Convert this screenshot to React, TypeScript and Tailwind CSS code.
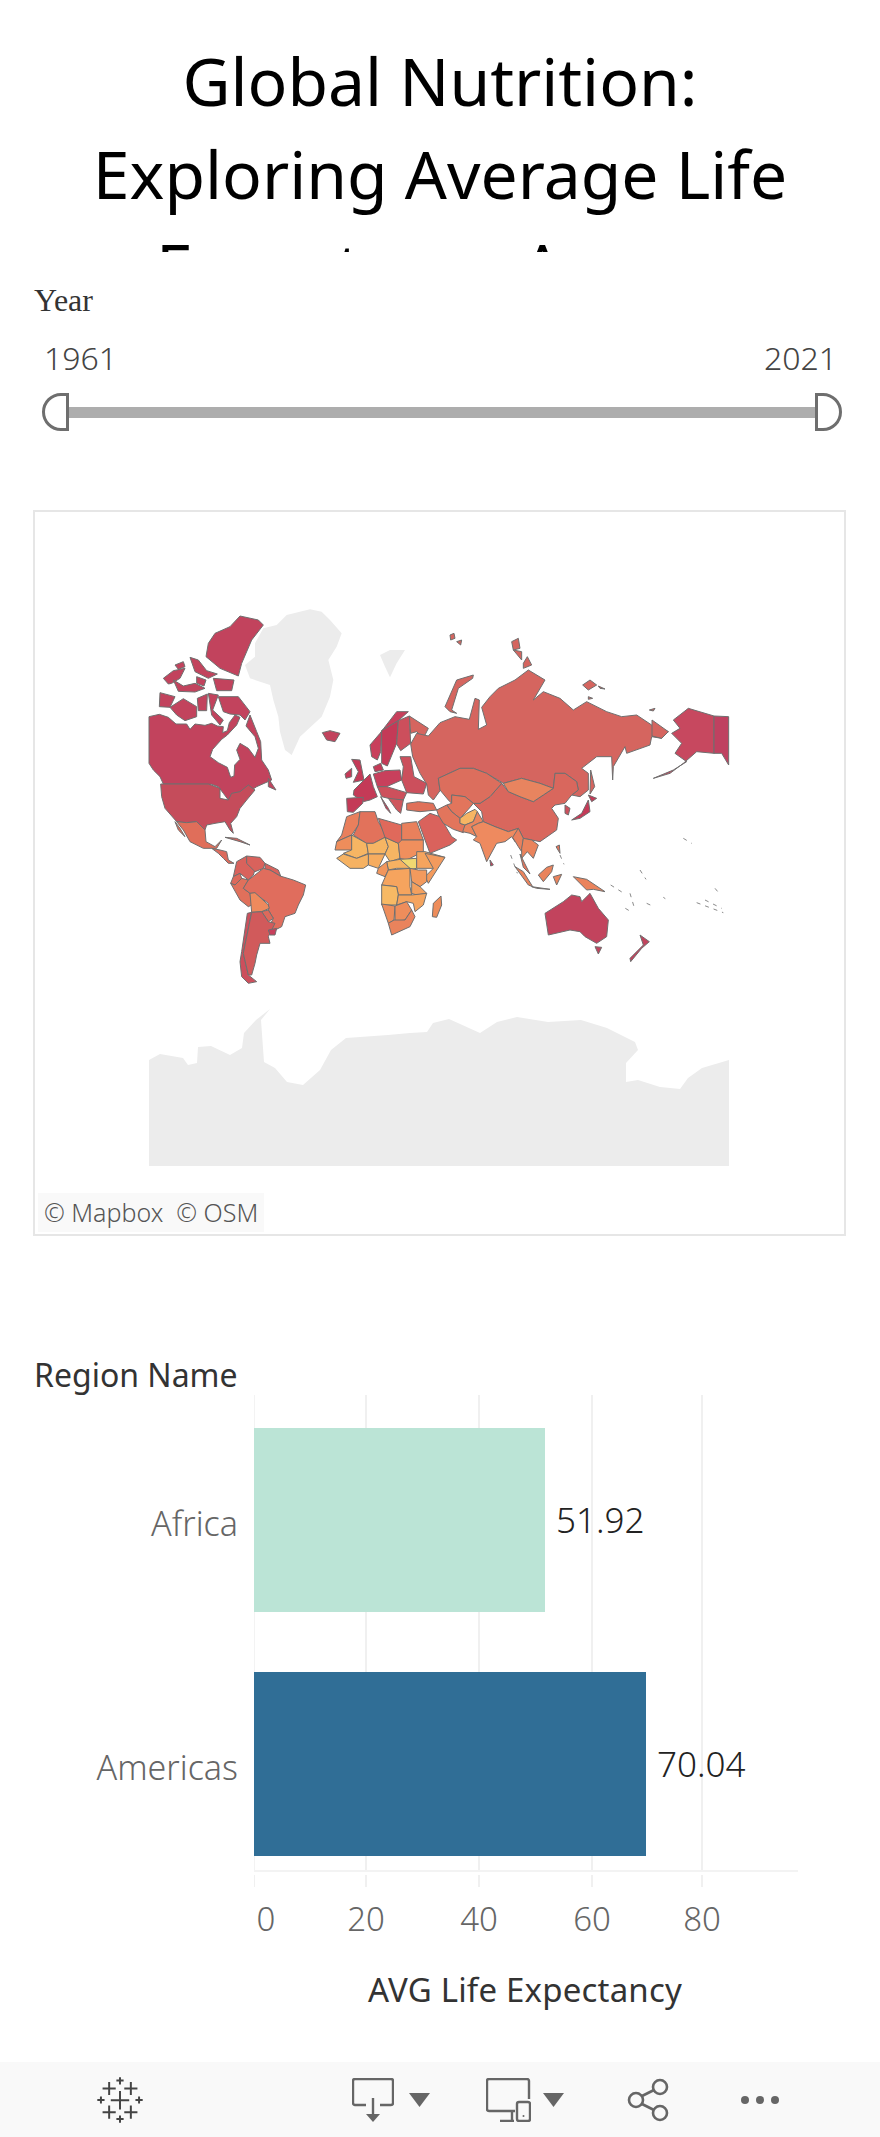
const STROKE = '#6f6f6f';

// Each group is traced in 3x crop coordinates, anchored at a page offset.
type Shape = [string, string];

const NORTH_WEST: Shape[] = [
  ['#c2435d', '27,350 58,343 85,352 108,372 140,372 150,388 165,372 195,376 215,370 232,378 250,380 248,398 262,392 268,368 285,345 300,352 290,375 262,405 245,418 218,448 210,470 235,488 262,502 272,532 282,528 284,495 300,478 290,450 300,430 325,445 345,472 355,445 345,410 318,378 330,345 350,395 362,425 365,480 385,510 395,540 350,560 320,580 297,606 265,600 250,580 235,560 215,553 70,552 60,530 40,510 27,490'],
  ['#c2435d', '385,535 408,570 385,560'],
  ['#c2435d', '370,75 355,60 300,48 270,80 225,100 205,130 198,170 240,205 295,228 305,190 335,120'],
  ['#c2435d', '70,235 100,212 135,205 120,235 95,250 85,252'],
  ['#c2435d', '105,195 130,185 135,200 115,208'],
  ['#c2435d', '150,172 175,180 200,212 232,222 205,235 165,215'],
  ['#c2435d', '100,240 130,258 165,250 195,265 165,276 115,274'],
  ['#c2435d', '170,230 198,240 192,258 170,250'],
  ['#c2435d', '220,235 282,240 275,272 230,272'],
  ['#c2435d', '60,278 105,290 90,322 58,320'],
  ['#c2435d', '90,322 130,296 170,320 170,350 135,362 110,345'],
  ['#c2435d', '172,295 202,282 200,332 175,332'],
  ['#c2435d', '205,280 235,285 218,330 250,360 240,375 215,345'],
  ['#c2435d', '235,290 295,290 330,335 315,360 300,345 270,342 250,335'],
  ['#c2435d', '547,398 570,392 600,400 585,425 560,420'],
  ['#c43a57', '635,478 660,480 672,540 640,547 655,515'],
  ['#c43a57', '615,522 635,505 635,530 618,535'],
  ['#c8405c', '690,435 720,400 770,335 805,335 775,362 725,392 722,455 712,480 695,470'],
  ['#c43a57', '725,392 775,362 770,430 742,498 725,490'],
  ['#cc4f5c', '775,362 808,348 812,430 782,452 770,432'],
  ['#d5655f', '808,348 865,385 850,415 830,395 812,400'],
  ['#c43a57', '700,500 722,490 730,510 705,515'],
  ['#c43a57', '642,570 690,522 700,560 712,590 690,600 670,605 640,585'],
  ['#c8405c', '700,522 735,512 780,510 785,540 740,560 712,560'],
  ['#cc4f5c', '780,470 812,470 822,530 860,550 850,582 800,578 785,540 790,500'],
  ['#cd505c', '712,560 740,560 800,578 790,600 765,600 745,595 725,590'],
  ['#c43a57', '722,590 745,625 752,640 738,625'],
  ['#cf565c', '745,595 790,600 782,640 770,630'],
  ['#c43a57', '620,595 670,592 668,610 640,637 622,635'],
];

const GREENLAND: string[] = [
  '315,195 345,170 345,130 370,85 410,75 440,45 510,28 545,35 570,60 605,100 590,140 565,180 580,240 570,290 545,350 480,410 455,465 435,450 420,395 415,350 400,300 390,255 330,235',
  '720,165 750,150 795,150 770,190 750,232 735,200',
];

// Antarctica, in page pixels
const ANTARCTICA =
  '149,1060 160,1054 183,1058 188,1065 197,1063 198,1047 211,1046 230,1055 242,1048 244,1033 256,1020 270,1009 261,1020 264,1062 275,1068 287,1082 303,1085 320,1070 331,1050 346,1038 388,1035 410,1033 427,1032 433,1023 449,1019 480,1033 497,1022 517,1017 548,1022 581,1020 607,1028 635,1042 638,1050 626,1063 626,1082 638,1080 660,1087 680,1089 688,1078 702,1068 729,1060 729,1166 149,1166';

const NORTH_EAST: Shape[] = [
  ['#d5655f', '-35,408 0,368 45,350 88,358 105,295 118,300 115,388 140,375 125,322 150,290 175,265 225,240 265,210 315,240 280,300 310,275 360,295 400,330 440,305 500,335 545,350 590,345 635,375 685,395 665,415 635,410 630,435 560,460 555,440 520,500 518,540 515,470 470,470 425,505 445,520 445,570 420,590 395,585 415,570 410,545 375,520 345,520 340,565 300,550 245,535 190,550 140,520 100,505 60,505 -5,535 0,572 -20,600 -35,585 -40,552 -60,520 -82,470 -88,432 -70,400'],
  ['#d5655f', '15,320 50,240 100,225 98,235 55,265 35,330 50,340 30,335'],
  ['#d5655f', '215,125 235,115 240,145 220,150'],
  ['#d5655f', '220,150 245,155 245,180'],
  ['#d5655f', '250,190 262,170 275,195 250,205'],
  ['#d5655f', '428,255 450,240 470,255 445,270'],
  ['#d5655f', '475,258 495,267 480,265'],
  ['#d5655f', '445,290 458,295 445,298'],
  ['#d5655f', '628,330 645,325 640,333'],
  ['#d5655f', '452,510 464,560 450,582'],
  ['#d5655f', '636,360 685,395 665,415 636,408'],
  ['#c7485f', '700,360 745,325 822,348 822,460 770,455 730,490 690,520 640,535 700,510 740,485 705,460 725,430 695,400 720,385'],
  ['#bf4160', '822,348 866,350 866,495 845,460 822,460'],
  ['#d5655f', '30,105 42,100 45,115 32,120'],
  ['#d5655f', '50,125 65,120 62,135'],
];

const SOUTH_WEST: Shape[] = [
  ['#c54c5b', '62,12 205,12 240,25 240,55 265,60 275,40 300,35 325,15 345,30 320,60 300,85 290,110 272,130 280,160 270,150 255,125 225,130 200,135 195,150 170,125 140,128 110,125 75,85 65,50'],
  ['#e06e5a', '110,125 140,128 170,125 195,150 198,185 225,200 245,180 230,205 215,205 190,205 150,185 130,150'],
  ['#e06e5a', '105,125 120,145 135,170 115,150'],
  ['#dc6a5c', '215,205 240,210 260,215 265,240 282,250 265,250 250,235 235,220'],
  ['#d5655f', '255,172 290,175 330,195 300,185'],
  // South America
  ['#d9625c', '290,245 320,228 320,250 345,270 340,285 325,300 300,280 280,290'],
  ['#d9625c', '320,228 360,232 375,250 370,265 345,275 320,250'],
  ['#d9625c', '375,250 415,270 422,288 390,270 375,275'],
  ['#dd695b', '272,310 280,290 300,280 305,295 285,315'],
  ['#e0705b', '272,310 285,315 305,295 325,300 310,325 330,340 335,375 325,380 300,360'],
  ['#e06d5d', '310,325 325,300 345,285 370,265 390,270 420,288 460,300 497,315 490,345 475,375 465,400 435,410 425,440 405,450 385,445 400,415 385,390 385,370 345,340 330,340'],
  ['#ee8a5d', '330,340 345,338 385,375 388,385 365,395 335,397'],
  ['#dd695b', '365,395 385,390 400,415 385,425'],
  ['#cc4f5c', '322,400 335,397 318,480 310,520 325,585 350,605 325,610 305,590 300,545 305,515'],
  ['#d15a5b', '335,397 365,395 385,425 405,430 385,470 390,490 360,490 350,525 345,550 335,585 325,585 310,520 318,480'],
  ['#c8405c', '385,450 410,445 405,465 390,465'],
  // Africa
  ['#e97f5c', '620,110 660,95 655,135 635,165 590,185 605,165'],
  ['#e2725b', '660,95 705,95 715,125 740,170 700,190 680,190 640,165 655,135'],
  ['#ee8d5b', '590,185 635,165 635,210 585,210'],
  ['#f6b563', '635,165 680,190 685,220 650,235 610,220 635,210'],
  ['#f6b563', '680,190 700,190 735,172 745,200 735,222 685,222'],
  ['#f6b563', '735,172 775,190 780,235 750,245 735,222 745,200'],
  ['#e0695b', '715,115 750,125 785,135 785,185 775,190 735,172'],
  ['#e9805c', '785,130 830,125 850,180 785,180'],
  ['#f08f5d', '785,180 850,180 850,215 800,240 780,235 775,190'],
  ['#f6ac5f', '685,222 735,222 715,265 685,255'],
  ['#f6b262', '590,235 610,222 650,235 685,222 685,255 670,265 630,265'],
  ['#f1d871', '780,238 830,235 830,265 810,268'],
  ['#f5a45e', '830,215 855,215 915,232 880,265 830,265'],
  ['#f39a5d', '855,220 915,232 865,310 855,290 880,265'],
  ['#f6b262', '740,245 780,238 810,265 770,265 745,270'],
  ['#f1965d', '715,265 740,245 745,270 735,290 710,280'],
  ['#f6a45e', '745,270 810,265 810,320 815,345 775,345 770,320 725,315'],
  ['#f39a5d', '810,265 835,270 860,270 860,305 840,320 815,305'],
  ['#f3a05e', '815,305 840,320 860,340 830,345 815,340'],
  ['#f7b964', '725,315 770,320 775,345 770,375 725,375'],
  ['#f5a45e', '775,345 815,345 860,340 850,375 825,395 820,370 800,365 770,375'],
  ['#ee8d5b', '725,372 765,378 762,420 745,430'],
  ['#ee8d5b', '765,378 800,365 815,390 795,420 765,425'],
  ['#ea835c', '745,430 762,420 795,420 815,390 825,410 810,440 755,465'],
  ['#ee8d5b', '903,348 905,375 890,412 877,410 880,370'],
  // Turkey and the Middle East, west of the join
  ['#e07059', '800,70 835,65 880,70 890,90 840,95 800,90'],
  ['#da625c', '835,125 870,100 900,110 935,170 950,180 930,195 870,220 855,180'],
];

const SOUTH_EAST: Shape[] = [
  ['#d9675d', '185,10 205,35 240,50 280,65 310,45 340,25 345,-20 375,-20 410,5 415,30 395,45 375,70 345,75 335,85 355,115 350,150 300,185 250,175 235,145 205,155 165,140 130,125 125,95 100,70 120,70 150,50'],
  ['#e8845f', '190,10 245,-5 300,10 340,25 310,45 280,65 240,50 205,35'],
  ['#dc6e5d', '-5,-5 60,-35 100,-35 140,-20 185,10 150,50 120,70 100,70 75,50 35,45 35,70 25,60 0,30'],
  ['#e2755c', '35,45 75,50 100,70 85,88 60,115 35,95 20,75 35,70'],
  ['#e2755c', '-10,90 20,75 35,95 60,115 60,130 75,135 70,158 40,148 10,130 -5,105'],
  ['#f6b563', '60,115 80,100 105,88 112,95 100,125 75,135 60,130'],
  ['#ea855e', '100,125 112,95 130,125 115,130 95,140 110,170 90,160 68,155 75,135'],
  ['#ee8a5f', '130,125 165,140 205,155 235,145 240,165 225,185 215,170 195,185 170,190 140,245 120,190 100,180 110,170 95,140 115,130'],
  ['#c8405c', '150,240 160,255 152,258'],
  ['#e8805d', '235,145 250,175 245,215 235,200 218,172'],
  ['#ea835c', '250,175 275,180 295,195 280,235 262,215 245,235 245,205'],
  ['#e2755c', '240,222 270,282 250,262'],
  ['#ea835c', '225,260 250,275 278,320 265,315'],
  ['#ea835c', '295,285 320,262 340,255 335,275 310,305'],
  ['#ea835c', '275,320 330,328 290,325'],
  ['#ea835c', '340,290 365,283 350,315'],
  ['#ea835c', '400,290 440,298 495,335 460,328 440,330'],
  ['#e2755c', '348,200 358,195 360,220'],
  ['#c43a57', '395,120 425,100 445,60 450,95 420,115'],
  ['#c43a57', '445,45 470,55 455,65'],
  ['#cc4f5c', '375,75 390,85 385,105 375,100'],
  ['#c2435d', '315,400 370,365 395,345 420,350 425,365 450,340 475,385 505,420 500,470 470,490 435,470 420,455 390,450 325,465'],
  ['#c2435d', '465,500 485,502 475,522'],
  ['#c2435d', '600,465 628,485 605,505 572,545 570,535 610,495'],
];

const SPECKS = [
  'M730 175l25 15', 'M600 270l18 28', 'M620 370l22 10', 'M556 385l20 12', 'M512 315l35 22',
  'M570 340l12 40', 'M770 368l80 30', 'M795 360l50 25', 'M825 325l10 12', 'M670 352l6 4',
  'M360 225l12 28', 'M212 225l20 55',
];

function Shapes({ shapes, x, y }: { shapes: Shape[]; x: number; y: number }) {
  return (
    <g transform={`translate(${x} ${y}) scale(${1 / 3})`}>
      {shapes.map(([fill, points], i) => (
        <polygon
          key={i}
          points={points}
          fill={fill}
          stroke={STROKE}
          strokeWidth={1}
          strokeLinejoin="round"
          vectorEffect="non-scaling-stroke"
        />
      ))}
    </g>
  );
}

// viewBox is in page pixels, so the crop offsets can be used directly
function WorldMap() {
  return (
    <svg viewBox="35 512 809 722" className="block w-full h-full">
      <g transform={`translate(140 600) scale(${1 / 3})`} fill="#ececec">
        {GREENLAND.map((p, i) => (
          <polygon key={i} points={p} />
        ))}
      </g>
      <polygon points={ANTARCTICA} fill="#ececec" />
      <Shapes shapes={NORTH_WEST} x={140} y={600} />
      <Shapes shapes={NORTH_EAST} x={440} y={600} />
      <Shapes shapes={SOUTH_WEST} x={140} y={780} />
      <Shapes shapes={SOUTH_EAST} x={440} y={780} />
      <g transform={`translate(440 780) scale(${1 / 3})`} stroke="#8a8a8a" fill="none" strokeDasharray="4 5">
        {SPECKS.map((d, i) => (
          <path key={i} d={d} vectorEffect="non-scaling-stroke" />
        ))}
      </g>
    </svg>
  );
}

function Caret() {
  return (
    <svg width="21" height="14" viewBox="0 0 21 14" className="block">
      <path d="M0 0h21l-10.5 14z" fill="#666" />
    </svg>
  );
}

function TableauLogo() {
  return (
    <svg width="48" height="48" viewBox="105 76 146 146" className="block">
      <g stroke="#444" strokeWidth="6" transform="translate(39 0)">
        <path d="M139 122v56M111 150h56" />
        <path d="M106 94v40M86 114h40M172 94v40M152 114h40M106 166v40M86 186h40M172 166v40M152 186h40" />
        <path d="M139 80v22M128 90h22M139 196v22M128 207h22M81 138v22M70 149h22M197 138v22M186 149h22" />
      </g>
    </svg>
  );
}

function DownloadIcon() {
  return (
    <svg width="42" height="44" viewBox="0 0 42 44" fill="none" className="block">
      <path d="M14 27H3a2 2 0 0 1-2-2V3a2 2 0 0 1 2-2h36a2 2 0 0 1 2 2v22a2 2 0 0 1-2 2H28" stroke="#666" strokeWidth="2.4" />
      <path d="M21 20v17" stroke="#666" strokeWidth="2.4" />
      <path d="M14 36h14l-7 8z" fill="#666" />
    </svg>
  );
}

function DevicesIcon() {
  return (
    <svg width="45" height="44" viewBox="0 0 45 44" fill="none" stroke="#666" strokeWidth="2.4" className="block">
      <path d="M43 21V3a2 2 0 0 0-2-2H3a2 2 0 0 0-2 2v28a2 2 0 0 0 2 2h26" />
      <path d="M26 33v9M14 43h14" />
      <rect x="31" y="24" width="13" height="19" rx="2" />
      <circle cx="37.5" cy="38" r="1" fill="#666" stroke="none" />
    </svg>
  );
}

function ShareIcon() {
  return (
    <svg width="42" height="44" viewBox="0 0 42 44" fill="none" stroke="#666" strokeWidth="2.6" className="block">
      <circle cx="33" cy="9" r="7" />
      <circle cx="9" cy="22" r="7" />
      <circle cx="33" cy="35" r="7" />
      <path d="M15 18l12-6M15 26l12 6" />
    </svg>
  );
}

function Dots() {
  return (
    <div className="flex gap-[7px]">
      <span className="w-[8px] h-[8px] rounded-full bg-[#666]" />
      <span className="w-[8px] h-[8px] rounded-full bg-[#666]" />
      <span className="w-[8px] h-[8px] rounded-full bg-[#666]" />
    </div>
  );
}

function BarRow({ label, value, width, color }: { label: string; value: string; width: string; color: string }) {
  return (
    <div className="relative flex items-center">
      <div className="w-[238px] pt-[6px] text-right text-[34px] leading-[48px] font-light text-[#666]">{label}</div>
      <div className={`ml-[16px] h-[184px] ${width} ${color}`} />
      <div className="ml-[11px] text-[35px] leading-[48px] font-light text-[#222]">{value}</div>
    </div>
  );
}

export default function App() {
  return (
    <div className="flex flex-col w-[880px] h-[2137px] overflow-hidden bg-white font-['Noto_Sans',sans-serif]">
      <div className="h-[252px] shrink-0 overflow-hidden px-[70px] pt-[34px] text-center text-[66px] leading-[93px] text-black">
        Global Nutrition: Exploring Average Life Expectancy Across
      </div>

      <div className="mt-[28px] ml-[34px] h-[40px] font-['Liberation_Serif',serif] text-[32px] leading-[40px] text-[#333]">
        Year
      </div>
      <div className="mt-[18px] pl-[44px] pr-[43px] flex justify-between h-[40px] text-[32px] leading-[40px] font-light text-[#444]">
        <span>1961</span>
        <span>2021</span>
      </div>
      <div className="mt-[15px] ml-[42px] mr-[38px] flex items-center">
        <div className="w-[27px] h-[38px] border-[3px] border-[#6e6e6e] rounded-l-[19px]" />
        <div className="flex-1 h-[11px] bg-[#adadad]" />
        <div className="w-[27px] h-[38px] border-[3px] border-[#6e6e6e] rounded-r-[19px]" />
      </div>

      <div className="relative mt-[79px] ml-[33px] w-[813px] h-[726px] shrink-0 border-2 border-[#e6e6e6]">
        <WorldMap />
        <div className="absolute left-[3px] bottom-[2px] h-[39px] w-[226px] bg-[#f9f9f9] px-[6px] text-[25px] leading-[39px] font-light text-[#555] whitespace-pre">
          © Mapbox  © OSM
        </div>
      </div>

      <div className="mt-[119px] ml-[34px] h-[40px] text-[32px] leading-[40px] text-[#333]">Region Name</div>

      <div className="relative h-[477px] shrink-0 pt-[33px]">
        <div className="absolute top-0 bottom-0 left-[254px] w-[1px] bg-[#f3f3f3]" />
        <div className="absolute top-0 bottom-0 left-[365px] w-[2px] bg-[#f0f0f0]" />
        <div className="absolute top-0 bottom-0 left-[478px] w-[2px] bg-[#f0f0f0]" />
        <div className="absolute top-0 bottom-0 left-[591px] w-[2px] bg-[#f0f0f0]" />
        <div className="absolute top-0 bottom-0 left-[701px] w-[2px] bg-[#f0f0f0]" />
        <BarRow label="Africa" value="51.92" width="w-[291px]" color="bg-[#bbe4d6]" />
        <div className="h-[60px]" />
        <BarRow label="Americas" value="70.04" width="w-[392px]" color="bg-[#306e96]" />
        <div className="absolute bottom-0 left-[254px] w-[544px] h-[2px] bg-[#f3f3f3]" />
      </div>

      <div className="relative h-[12px] shrink-0 mt-[3px]">
        <div className="absolute top-0 bottom-0 left-[254px] w-[1px] bg-[#f0f0f0]" />
        <div className="absolute top-0 bottom-0 left-[365px] w-[2px] bg-[#f0f0f0]" />
        <div className="absolute top-0 bottom-0 left-[478px] w-[2px] bg-[#f0f0f0]" />
        <div className="absolute top-0 bottom-0 left-[591px] w-[2px] bg-[#f0f0f0]" />
        <div className="absolute top-0 bottom-0 left-[701px] w-[2px] bg-[#f0f0f0]" />
      </div>

      <div className="mt-[12px] flex h-[40px] text-[33px] leading-[40px] font-light text-[#666] text-center">
        <span className="ml-[246px] w-[40px]">0</span>
        <span className="ml-[60px] w-[40px]">20</span>
        <span className="ml-[73px] w-[40px]">40</span>
        <span className="ml-[73px] w-[40px]">60</span>
        <span className="ml-[70px] w-[40px]">80</span>
      </div>

      <div className="mt-[31px] ml-[368px] h-[40px] text-[33px] tracking-[0.2px] leading-[40px] text-[#333]">AVG Life Expectancy</div>

      <div className="mt-auto h-[75px] shrink-0 bg-[#f9f9f9] flex items-center">
        <div className="ml-[96px]">
          <TableauLogo />
        </div>
        <div className="ml-[208px]">
          <DownloadIcon />
        </div>
        <div className="ml-[15px]">
          <Caret />
        </div>
        <div className="ml-[56px]">
          <DevicesIcon />
        </div>
        <div className="ml-[12px]">
          <Caret />
        </div>
        <div className="ml-[63px]">
          <ShareIcon />
        </div>
        <div className="ml-[72px]">
          <Dots />
        </div>
      </div>
    </div>
  );
}
